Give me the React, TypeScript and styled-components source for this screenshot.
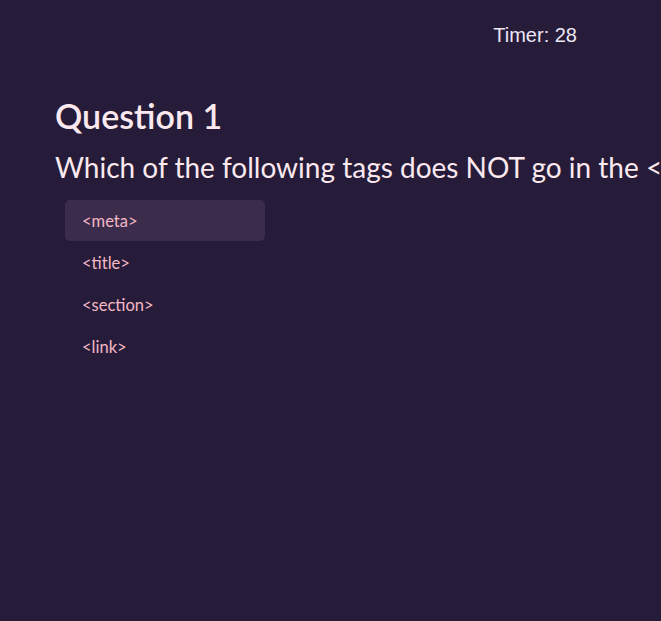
import React from "react";
import styled, { createGlobalStyle } from "styled-components";

const Global = createGlobalStyle`
  html, body { margin: 0; padding: 0; background: #261c39; overflow: hidden; }
  body { font-family: Lato, "Open Sans", sans-serif; }
`;

const Page = styled.div`
  width: 661px;
  height: 621px;
  background: #261c39;
  display: flex;
  flex-direction: column;
  padding: 0 0 0 55px;
  box-sizing: border-box;
  overflow: hidden;
`;

const TopBar = styled.div`
  display: flex;
  justify-content: flex-end;
  padding: 24px 84px 0 0;
`;

const Timer = styled.div`
  font-family: "Liberation Sans", Arial, sans-serif;
  font-size: 20px;
  color: #ece6f4;
  line-height: 23px;
`;

const Heading = styled.h2`
  margin: 49px 0 0;
  font-size: 34px;
  font-weight: 600;
  color: #fbe9ef;
  line-height: 40px;
`;

const QuestionText = styled.p`
  margin: 14px 0 0;
  font-size: 28px;
  font-weight: 400;
  color: #fbe9ef;
  white-space: nowrap;
  line-height: 34px;
`;

const Options = styled.ul`
  list-style: none;
  margin: 16px 0 0 10px;
  padding: 0;
  display: flex;
  flex-direction: column;
`;

const Option = styled.li<{ $active?: boolean }>`
  width: 200px;
  height: 41px;
  box-sizing: border-box;
  padding: 0 17px;
  display: flex;
  align-items: center;
  border-radius: 5px;
  background: ${(p) => (p.$active ? "#3b2c4c" : "transparent")};
  color: #f5b8c6;
  font-size: 16.5px;
  margin-bottom: 1px;
`;

const options = ["<meta>", "<title>", "<section>", "<link>"];

export default function App() {
  return (
    <>
      <Global />
      <Page>
        <TopBar>
          <Timer>Timer: 28</Timer>
        </TopBar>
        <Heading>Question 1</Heading>
        <QuestionText>Which of the following tags does NOT go in the &lt;head&gt; section?</QuestionText>
        <Options>
          {options.map((o, i) => (
            <Option key={o} $active={i === 0}>
              {o}
            </Option>
          ))}
        </Options>
      </Page>
    </>
  );
}
